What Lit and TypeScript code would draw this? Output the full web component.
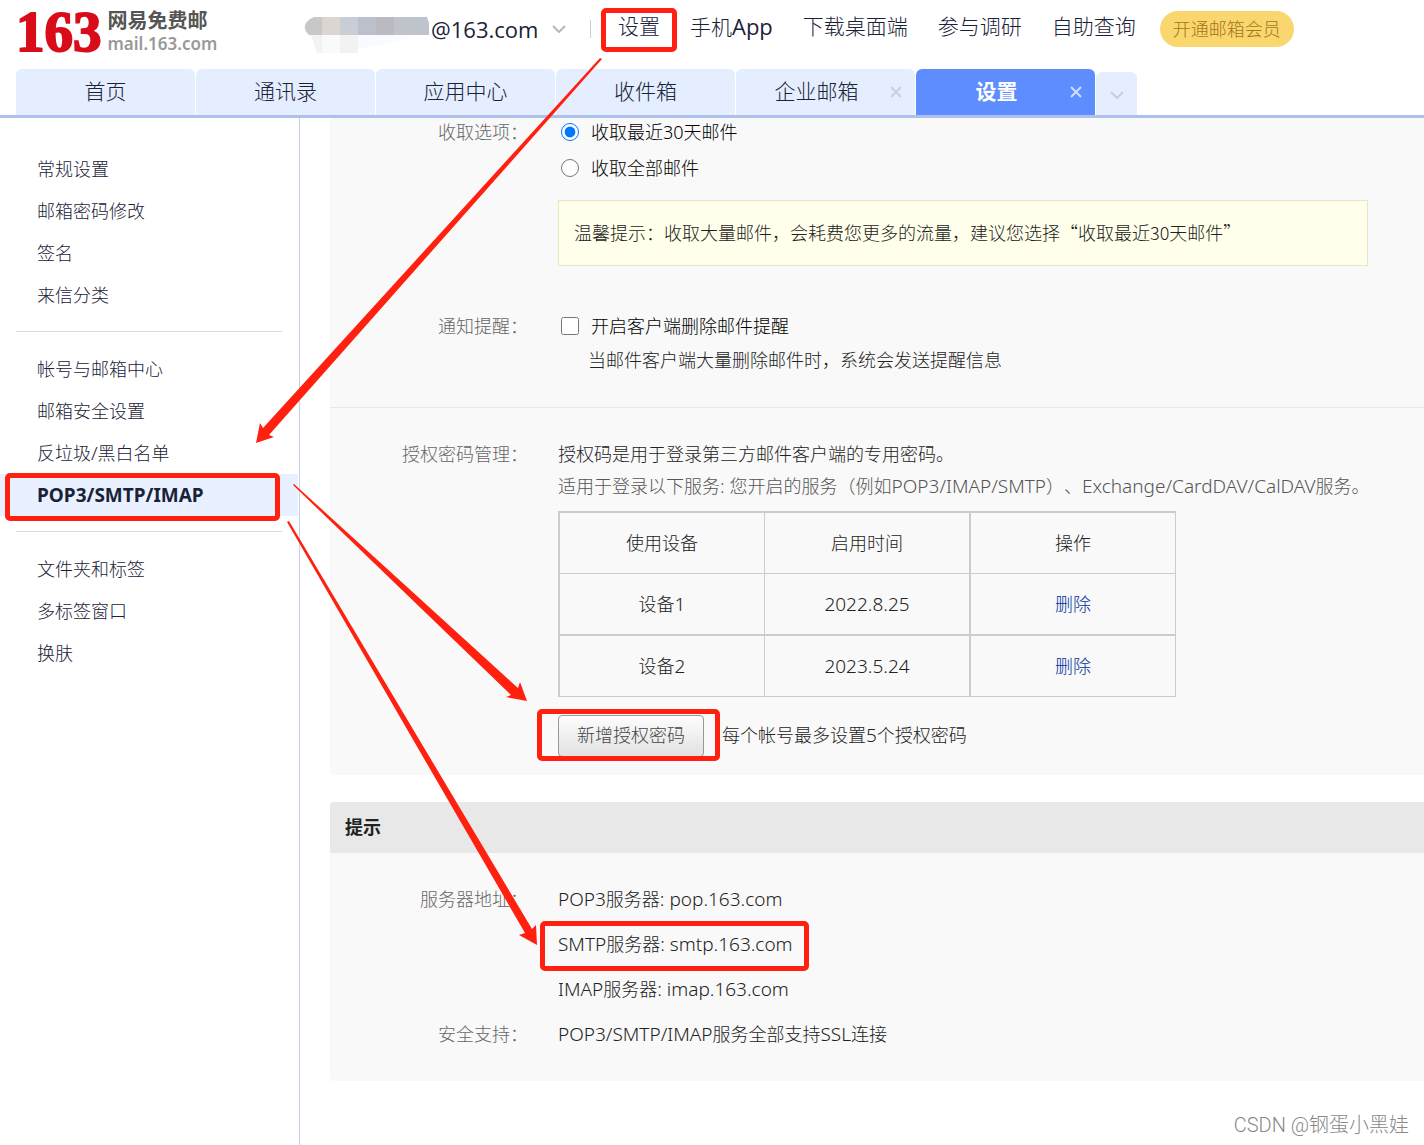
import { LitElement, html, svg, css } from "lit";
import { customElement, state } from "lit/decorators.js";

interface Tab {
  label: string;
  closable?: boolean;
  active?: boolean;
}

const NAV = ["设置", "手机App", "下载桌面端", "参与调研", "自助查询"];

const TABS: Tab[] = [
  { label: "首页" },
  { label: "通讯录" },
  { label: "应用中心" },
  { label: "收件箱" },
  { label: "企业邮箱", closable: true },
  { label: "设置", closable: true, active: true },
];

const MENU = [
  ["常规设置", "邮箱密码修改", "签名", "来信分类"],
  ["帐号与邮箱中心", "邮箱安全设置", "反垃圾/黑白名单", "POP3/SMTP/IMAP"],
  ["文件夹和标签", "多标签窗口", "换肤"],
];

const DEVICES = [
  { name: "设备1", date: "2022.8.25" },
  { name: "设备2", date: "2023.5.24" },
];

const SERVERS = ["POP3服务器: pop.163.com", "SMTP服务器: smtp.163.com", "IMAP服务器: imap.163.com"];

const MARK_BOXES = [
  { x: 601, y: 8, w: 76, h: 44 },
  { x: 5, y: 473, w: 275, h: 48 },
  { x: 537, y: 709, w: 183, h: 52 },
  { x: 540, y: 921, w: 269, h: 50 },
];

const MARK_ARROWS = [
  "600,58 602,59 269,435 274,437 256,443 260,423 263,428",
  "293,485 294,484 518,688 520,682 527,701 506,697 511,695",
  "287,522 289,521 532,929 536,925 537,945 519,935 525,933",
];

/** Wraps the Latin runs of a mixed text, which are set one size larger than the Chinese. */
const mixed = (text: string) =>
  text
    .split(/([\x20-\x7e]+)/)
    .filter((part) => part)
    .map((part) => (/^[\x20-\x7e]/.test(part) ? html`<span class="latin">${part}</span>` : part));

@customElement("mail-header")
export class MailHeader extends LitElement {
  static styles = css`
    :host {
      display: block;
      color: #1a2238;
      font-size: 21px;
    }
    .latin {
      font-family: "Open Sans", sans-serif;
      font-size: 22px;
      font-weight: 400;
    }
    .bar {
      display: flex;
      align-items: center;
      height: 57px;
      padding: 0 14px 12px;
    }
    .logo {
      display: flex;
      align-items: center;
      gap: 6px;
      flex: none;
      width: 290px;
      padding-left: 2px;
      box-sizing: border-box;
      text-decoration: none;
    }
    .number {
      margin-top: 6px;
      font: bold 57px/64px "Liberation Serif", serif;
      color: #d90d1a;
      -webkit-text-stroke: 2px #d90d1a;
    }
    .words {
      display: flex;
      flex-direction: column;
      padding-top: 6px;
    }
    .cn {
      font-size: 20px;
      line-height: 24px;
      font-weight: 700;
      color: #555;
    }
    .en {
      font-size: 17px;
      line-height: 22px;
      font-weight: 600;
      color: #999;
    }
    .account {
      display: flex;
      align-items: center;
      flex: none;
      width: 287px;
    }
    .mask {
      width: 127px;
      height: 64px;
      flex: none;
    }
    .chevron {
      width: 14px;
      height: 8px;
      margin-left: 14px;
    }
    .divider {
      width: 1px;
      height: 18px;
      background: #ccc;
      margin-left: auto;
    }
    nav {
      display: flex;
      gap: 30px;
      margin-left: 27px;
      padding-bottom: 4px;
      flex: none;
    }
    nav a {
      color: inherit;
      text-decoration: none;
      line-height: 30px;
      white-space: nowrap;
    }
    .vip {
      flex: none;
      margin-left: 24px;
      height: 36px;
      padding: 0 13px;
      border: 0;
      border-radius: 18px;
      background: #fad66f;
      color: #a67518;
      font: inherit;
      font-size: 18px;
      line-height: 24px;
    }
    .tabs {
      display: flex;
      align-items: flex-end;
      gap: 1px;
      padding: 0 16px;
      border-bottom: 3px solid #adc1ec;
    }
    .tab {
      display: flex;
      align-items: center;
      flex: 0 1 179px;
      height: 46px;
      border-radius: 6px 6px 0 0;
      background: #e5eeff;
    }
    .tab.active {
      background: #5e8dff;
      color: #fff;
      font-weight: 700;
    }
    .name,
    .close,
    .more {
      border: 0;
      padding: 0;
      background: none;
      color: inherit;
      font: inherit;
    }
    .name {
      flex: 1;
      padding-bottom: 2px;
      line-height: 30px;
    }
    .closable .name {
      padding-left: 20px;
    }
    .close {
      display: flex;
      justify-content: center;
      width: 38px;
    }
    .close svg {
      width: 12px;
      height: 12px;
      stroke: #c3cfe3;
    }
    .active .close svg {
      stroke: #cfdeff;
    }
    .more {
      display: flex;
      align-items: center;
      justify-content: center;
      width: 41px;
      height: 43px;
      border-radius: 6px 6px 0 0;
      background: #e5eeff;
    }
    .more .chevron {
      margin: 2px 0 0;
    }
  `;

  private chevron(color: string) {
    return html`<svg class="chevron" viewBox="0 0 14 8" fill="none" stroke=${color} stroke-width="2">
      <path d="M1 1l6 6 6-6" />
    </svg>`;
  }

  render() {
    return html`
      <header class="bar">
        <a class="logo" href="#">
          <span class="number">163</span>
          <span class="words"><span class="cn">网易免费邮</span><span class="en">mail.163.com</span></span>
        </a>
        <div class="account">
          <svg class="mask" viewBox="0 0 127 64" aria-hidden="true">
            <path d="M4 38h105q-24 10-54 14-30 3-42-5z" fill="#fafbff" />
            <path d="M7 38h11v18h-5z" fill="#f3f3f3" />
            <path d="M18 38h18v18h-18z" fill="#fafafa" />
            <path d="M36 38h18v18h-18z" fill="#f2f2f2" />
            <path d="M10 20h8v18H5q-9-9 1-16z" fill="#c9c8c9" />
            <path d="M18 20h18v18h-18z" fill="#dcd5d1" />
            <path d="M36 20h18v18h-18z" fill="#c9ced6" />
            <path d="M54 20h18v18h-18z" fill="#bcc0cb" />
            <path d="M72 20h18v18h-18z" fill="#b9bac2" />
            <path d="M90 20h18v18h-18z" fill="#c0c3c9" />
            <path d="M108 20h15l2 6v12h-17z" fill="#bfc3cb" />
          </svg>
          <span class="latin">@163.com</span>
          ${this.chevron("#b3b8c2")}
          <span class="divider"></span>
        </div>
        <nav>${NAV.map((n) => html`<a href="#">${mixed(n)}</a>`)}</nav>
        <button class="vip">开通邮箱会员</button>
      </header>
      <div class="tabs">
        ${TABS.map(
          (t) => html`<div class="tab ${t.active ? "active" : ""} ${t.closable ? "closable" : ""}">
            <button class="name">${t.label}</button>
            ${t.closable
              ? html`<button class="close" aria-label="关闭">
                  <svg viewBox="0 0 12 12" stroke-width="2"><path d="M1 1l10 10M11 1L1 11" /></svg>
                </button>`
              : ""}
          </div>`,
        )}
        <button class="more" aria-label="更多">${this.chevron("#c3cfe3")}</button>
      </div>
    `;
  }
}

@customElement("settings-menu")
export class SettingsMenu extends LitElement {
  static styles = css`
    :host {
      display: block;
      box-sizing: border-box;
      flex: none;
      width: 300px;
      padding-top: 30px;
      border-right: 1px solid #c6d0ea;
    }
    .latin {
      font-size: 19px;
    }
    .group {
      margin: 0;
      padding: 0;
      list-style: none;
    }
    .rule {
      margin: 15px 17px 16px 16px;
      border: 0;
      border-top: 1px solid #ddd;
    }
    .link {
      display: block;
      margin-right: 1px;
      padding-left: 37px;
      line-height: 42px;
      color: #1a2238;
      text-decoration: none;
    }
    .link.current {
      background: #e9f0ff;
      font-weight: 700;
    }
  `;

  render() {
    return html`${MENU.map(
      (group, i) => html`${i ? html`<hr class="rule" />` : ""}
        <ul class="group">
          ${group.map(
            (item) =>
              html`<li><a class="link ${item.startsWith("POP3") ? "current" : ""}" href="#">${mixed(item)}</a></li>`,
          )}
        </ul>`,
    )}`;
  }
}

@customElement("settings-panel")
export class SettingsPanel extends LitElement {
  @state() private range = "recent";

  static styles = css`
    :host {
      display: block;
      flex: 1;
      min-width: 0;
      padding-left: 30px;
      color: #222;
    }
    .latin {
      font-size: 19px;
    }
    .card {
      background: #f9f9f9;
      border-radius: 0 0 0 4px;
    }
    .part {
      display: flex;
      flex-direction: column;
      gap: 46px;
      padding-bottom: 31px;
    }
    .part.keys {
      border-top: 1px solid #e8e8e8;
      padding: 30px 0 18px;
    }
    .row {
      display: grid;
      grid-template-columns: 198px 1fr;
      column-gap: 30px;
      line-height: 28px;
    }
    .label {
      text-align: right;
      color: #666;
    }
    .options {
      display: flex;
      flex-direction: column;
      gap: 8px;
    }
    .choice {
      display: flex;
      align-items: center;
      gap: 12px;
      padding-left: 3px;
      color: #000;
    }
    .choice input {
      width: 18px;
      height: 18px;
      margin: 0;
      accent-color: #0075ff;
    }
    .tip {
      margin: 10px 56px 0 0;
      padding: 17px 15px 19px;
      border: 1px solid #e6e8c4;
      background: #ffffeb;
      font-family: "Noto Sans CJK SC", sans-serif;
    }
    .hint {
      margin-top: -2px;
      padding: 0 0 2px 30px;
    }
    .keys .row {
      line-height: 32px;
    }
    .keys p {
      margin: 0;
    }
    .scope {
      color: #555;
      white-space: nowrap;
    }
    .devices {
      margin-top: 9px;
      border: 0 solid #ccc;
      border-width: 2px 0 0 2px;
      border-spacing: 0;
      line-height: 28px;
    }
    .devices th,
    .devices td {
      width: 204px;
      height: 28px;
      padding: 16px 0;
      border: 0 solid #ccc;
      border-width: 0 1px 1px 0;
      font-weight: inherit;
      text-align: center;
    }
    .devices tr > :nth-child(2) {
      border-right-width: 2px;
    }
    .devices .odd td {
      border-bottom-width: 2px;
    }
    .devices a {
      color: #003399;
      text-decoration: none;
    }
    .add {
      display: flex;
      align-items: center;
      gap: 18px;
      margin-top: 18px;
    }
    .add button {
      height: 42px;
      padding: 0 18px 2px;
      border: 1px solid #999;
      border-radius: 4px;
      background: linear-gradient(#fdfdfd, #e1e1e1);
      color: #444;
      font: inherit;
    }
    .add .limit {
      padding-bottom: 2px;
    }
    .info {
      margin-top: 27px;
      border-radius: 4px 0 0 4px;
      overflow: hidden;
    }
    .info h2 {
      margin: 0;
      padding-left: 15px;
      background: #e8e8e8;
      color: #222;
      font-size: 18px;
      line-height: 51px;
    }
    .info .body {
      padding: 24px 0;
    }
    .info .row,
    .info .line {
      height: 45px;
      line-height: 45px;
    }
    .info .servers {
      height: auto;
    }
  `;

  private radio(value: string, text: string) {
    return html`<label class="choice">
      <input
        type="radio"
        name="range"
        .checked=${this.range === value}
        @change=${() => (this.range = value)}
      />${text}
    </label>`;
  }

  render() {
    return html`
      <section class="card">
        <div class="part">
          <div class="row">
            <span class="label">收取选项：</span>
            <div class="options">
              ${this.radio("recent", "收取最近30天邮件")} ${this.radio("all", "收取全部邮件")}
              <div class="tip">温馨提示：收取大量邮件，会耗费您更多的流量，建议您选择“收取最近30天邮件”</div>
            </div>
          </div>
          <div class="row">
            <span class="label">通知提醒：</span>
            <div class="options">
              <label class="choice"><input type="checkbox" />开启客户端删除邮件提醒</label>
              <div class="hint">当邮件客户端大量删除邮件时，系统会发送提醒信息</div>
            </div>
          </div>
        </div>
        <div class="part keys">
          <div class="row">
            <span class="label">授权密码管理：</span>
            <div>
              <p>授权码是用于登录第三方邮件客户端的专用密码。</p>
              <p class="scope">${mixed(
                "适用于登录以下服务: 您开启的服务（例如POP3/IMAP/SMTP）、Exchange/CardDAV/CalDAV服务。",
              )}</p>
              <table class="devices">
                <thead>
                  <tr><th>使用设备</th><th>启用时间</th><th>操作</th></tr>
                </thead>
                <tbody>
                  ${DEVICES.map(
                    (d, i) => html`<tr class=${i % 2 ? "even" : "odd"}>
                      <td>${mixed(d.name)}</td>
                      <td>${mixed(d.date)}</td>
                      <td><a href="#">删除</a></td>
                    </tr>`,
                  )}
                </tbody>
              </table>
              <div class="add">
                <button>新增授权密码</button><span class="limit">${mixed("每个帐号最多设置5个授权密码")}</span>
              </div>
            </div>
          </div>
        </div>
      </section>
      <section class="card info">
        <h2>提示</h2>
        <div class="body">
          <div class="row servers">
            <span class="label">服务器地址：</span>
            <div>${SERVERS.map((s) => html`<div class="line">${mixed(s)}</div>`)}</div>
          </div>
          <div class="row">
            <span class="label">安全支持：</span>
            <div>${mixed("POP3/SMTP/IMAP服务全部支持SSL连接")}</div>
          </div>
        </div>
      </section>
    `;
  }
}

@customElement("app-root")
export class AppRoot extends LitElement {
  static styles = css`
    :host {
      display: flex;
      flex-direction: column;
      position: relative;
      min-height: 100vh;
      overflow: hidden;
      background: #fff;
      font-family: "Noto Sans", "Noto Sans CJK SC", sans-serif;
      font-size: 18px;
      font-weight: 300;
      text-spacing-trim: space-all;
    }
    .main {
      display: flex;
      flex: 1;
    }
    .marks {
      position: absolute;
      top: 0;
      left: 0;
      width: 100%;
      height: 100%;
      pointer-events: none;
    }
    .credit {
      position: absolute;
      right: 15px;
      bottom: 5px;
      font: 300 20px/30px Roboto, "Noto Sans CJK SC", sans-serif;
      color: #888;
    }
  `;

  render() {
    return html`
      <mail-header></mail-header>
      <main class="main">
        <settings-menu></settings-menu>
        <settings-panel></settings-panel>
      </main>
      <svg class="marks" aria-hidden="true">
        ${MARK_BOXES.map(
          (b) => svg`<rect x=${b.x + 2.5} y=${b.y + 2.5} width=${b.w - 5} height=${b.h - 5} rx="2.5"
            fill="none" stroke="#ff2010" stroke-width="5" />`,
        )}
        ${MARK_ARROWS.map((p) => svg`<polygon points=${p} fill="#ff2010" />`)}
      </svg>
      <div class="credit">CSDN @钢蛋小黑娃</div>
    `;
  }
}
